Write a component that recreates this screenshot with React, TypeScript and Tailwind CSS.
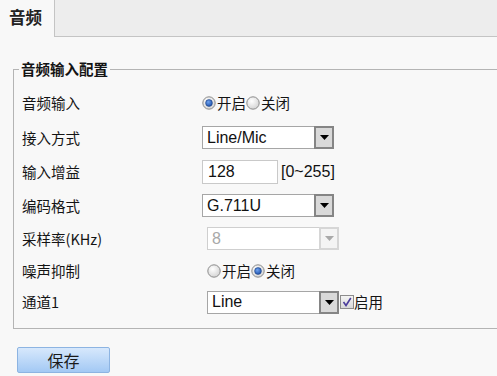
import React from "react";

const cn = "'Noto Sans CJK SC', 'Liberation Sans', sans-serif";
const ar = "'Liberation Sans', 'Noto Sans CJK SC', sans-serif";

function Radio({ checked }: { checked: boolean }) {
  return (
    <svg width="14" height="14" viewBox="0 0 14 14" className="shrink-0">
      <defs>
        <radialGradient id={checked ? "rgc" : "rgu"} cx="0.4" cy="0.35" r="0.7">
          <stop offset="0" stopColor="#ffffff" />
          <stop offset="1" stopColor="#d2d2d2" />
        </radialGradient>
        <radialGradient id="dot" cx="0.4" cy="0.35" r="0.7">
          <stop offset="0" stopColor="#6fa3f0" />
          <stop offset="1" stopColor="#1b4ea8" />
        </radialGradient>
      </defs>
      <circle cx="7" cy="7" r="6.2" fill={`url(#${checked ? "rgc" : "rgu"})`} stroke="#8c8c8c" strokeWidth="1" />
      {checked && <circle cx="7" cy="7" r="3.4" fill="url(#dot)" stroke="#1d3f80" strokeWidth="0.6" />}
    </svg>
  );
}

function Select({ value, disabled }: { value: string; disabled?: boolean }) {
  return (
    <div
      className={`flex h-[23px] w-[132px] items-stretch border bg-white ${
        disabled ? "border-[#cfcfcf]" : "border-[#a6a6a6]"
      }`}
    >
      <div
        className={`flex flex-1 items-center pl-[4px] text-[16px] leading-none ${
          disabled ? "text-[#a8a8a8]" : "text-[#111]"
        }`}
        style={{ fontFamily: ar }}
      >
        {value}
      </div>
      <div
        className={`flex w-[20px] items-center justify-center border-2 ${
          disabled ? "border-[#d6d6d6] bg-[#f4f4f4]" : "border-[#858585] bg-[#d9d9d9]"
        } -my-px -mr-px`}
      >
        <svg width="9" height="5" viewBox="0 0 9 5">
          <path d="M0 0 H9 L4.5 5 Z" fill={disabled ? "#a9a9a9" : "#000"} />
        </svg>
      </div>
    </div>
  );
}

function Row({ label, h, children }: { label: string; h: string; children?: React.ReactNode }) {
  return (
    <div className={`flex items-center ${h}`}>
      <div className="w-[188px] pl-[8px] text-[14.5px] text-[#141414]" style={{ fontFamily: cn }}>
        {label}
      </div>
      <div className="flex items-center">{children}</div>
    </div>
  );
}

function RadioPair({ on }: { on: boolean }) {
  return (
    <div className="flex items-center text-[14.5px] text-[#141414]" style={{ fontFamily: cn }}>
      <Radio checked={on} />
      <span className="ml-px">开启</span>
      <Radio checked={!on} />
      <span className="ml-px">关闭</span>
    </div>
  );
}

export default function App() {
  return (
    <div className="relative h-[376px] w-[497px] overflow-hidden bg-[#f8f8f8]" style={{ fontFamily: cn }}>
      <div className="flex h-[37px]">
        <div className="flex w-[54px] items-center pl-[9px] pb-[2px] text-[16.5px] font-bold text-[#222]">音频</div>
        <div className="flex-1 border-b border-l border-[#c4c4c4] bg-[#ededed]" />
      </div>

      <fieldset className="ml-[13px] mt-[23px] w-[520px] border border-[#b4b4b4] pb-[10px]">
        <legend
          className="ml-[5px] px-[2px] text-[14.5px] font-bold leading-[18px] text-[#141414]"
          style={{ fontFamily: cn }}
        >
          音频输入配置
        </legend>
        <div className="flex flex-col pt-[8px]">
          <Row label="音频输入" h="h-[34px]">
            <RadioPair on={true} />
          </Row>
          <Row label="接入方式" h="h-[35px]">
            <Select value="Line/Mic" />
          </Row>
          <Row label="输入增益" h="h-[34px]">
            <div className="flex items-center">
              <div
                className="flex h-[24px] w-[76px] items-center border border-[#c9c9c9] bg-white pl-[5px] text-[16px] text-[#111]"
                style={{ fontFamily: ar }}
              >
                128
              </div>
              <span className="ml-[3px] text-[16px] text-[#111]" style={{ fontFamily: ar }}>
                [0~255]
              </span>
            </div>
          </Row>
          <Row label="编码格式" h="h-[33px]">
            <Select value="G.711U" />
          </Row>
          <Row label="采样率(KHz)" h="h-[33px]">
            <div className="ml-[5px]">
              <Select value="8" disabled />
            </div>
          </Row>
          <Row label="噪声抑制" h="h-[31px]">
            <div className="ml-[5px]">
              <RadioPair on={false} />
            </div>
          </Row>
          <Row label="通道1" h="h-[32px]">
            <div className="ml-[5px] flex items-center">
              <Select value="Line" />
              <div className="ml-[1px] flex h-[14px] w-[14px] items-center justify-center border border-[#8c8c8c] bg-gradient-to-b from-[#f4f4f4] to-[#d8d8d8]">
                <svg width="10" height="10" viewBox="0 0 10 10">
                  <path d="M1.5 5 L4 8.5 L8.8 1" fill="none" stroke="#4b3d9c" strokeWidth="1.6" />
                </svg>
              </div>
              <span className="text-[14.5px] text-[#141414]" style={{ fontFamily: cn }}>
                启用
              </span>
            </div>
          </Row>
        </div>
      </fieldset>

      <div className="ml-[17px] mt-[18px]">
        <button className="flex h-[26px] w-[93px] items-center justify-center rounded-[2px] border border-[#8db4e2] bg-gradient-to-b from-[#d7e8fc] to-[#a3c9f4] text-[16px] text-[#1a1a1a]" style={{ fontFamily: cn }}>
          保存
        </button>
      </div>
    </div>
  );
}
